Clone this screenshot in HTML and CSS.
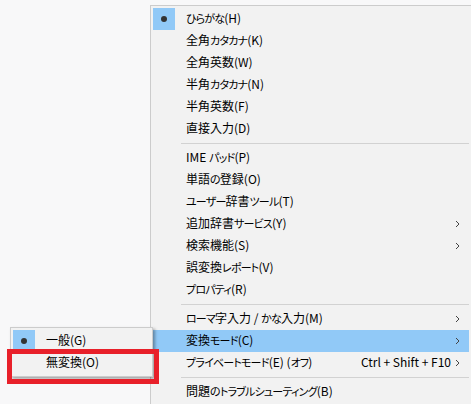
FILE: index.html
```html
<!DOCTYPE html>
<html lang="ja">
<head>
<meta charset="utf-8">
<link rel="stylesheet" href="styles.css">
</head>
<body>
<div class="desk">
  <div class="menu main">
    <div class="row"><span class="chk on"><span class="dot"></span></span><span class="label"><span class="k">ひらがな</span>(H)</span></div>
    <div class="row"><span class="chk"></span><span class="label">全角<span class="k">カタカナ</span>(K)</span></div>
    <div class="row"><span class="chk"></span><span class="label">全角英数(W)</span></div>
    <div class="row"><span class="chk"></span><span class="label">半角<span class="k">カタカナ</span>(N)</span></div>
    <div class="row"><span class="chk"></span><span class="label">半角英数(F)</span></div>
    <div class="row"><span class="chk"></span><span class="label">直接入力(D)</span></div>
    <div class="sep"></div>
    <div class="row"><span class="chk"></span><span class="label">IME <span class="k">パッド</span>(P)</span></div>
    <div class="row"><span class="chk"></span><span class="label">単語<span class="k">の</span>登録(O)</span></div>
    <div class="row"><span class="chk"></span><span class="label"><span class="k">ユーザー</span>辞書<span class="k">ツール</span>(T)</span></div>
    <div class="row"><span class="chk"></span><span class="label">追加辞書<span class="k">サービス</span>(Y)</span><svg class="arr" viewBox="0 0 5 8"><polyline points="1,1 4,4 1,7"/></svg></div>
    <div class="row"><span class="chk"></span><span class="label">検索機能(S)</span><svg class="arr" viewBox="0 0 5 8"><polyline points="1,1 4,4 1,7"/></svg></div>
    <div class="row"><span class="chk"></span><span class="label">誤変換<span class="k">レポート</span>(V)</span></div>
    <div class="row"><span class="chk"></span><span class="label"><span class="k">プロパティ</span>(R)</span></div>
    <div class="sep"></div>
    <div class="row"><span class="chk"></span><span class="label"><span class="k">ローマ</span>字入力 / <span class="k">かな</span>入力(M)</span><svg class="arr" viewBox="0 0 5 8"><polyline points="1,1 4,4 1,7"/></svg></div>
    <div class="row hl"><span class="chk"></span><span class="label">変換<span class="k">モード</span>(C)</span><svg class="arr" viewBox="0 0 5 8"><polyline points="1,1 4,4 1,7"/></svg></div>
    <div class="row"><span class="chk"></span><span class="label"><span class="k">プライベートモード</span>(E) (<span class="k">オフ</span>)</span><span class="key">Ctrl + Shift + F10</span><svg class="arr" viewBox="0 0 5 8"><polyline points="1,1 4,4 1,7"/></svg></div>
    <div class="sep"></div>
    <div class="row"><span class="chk"></span><span class="label">問題<span class="k">のトラブルシューティング</span>(B)</span></div>
  </div>
  <div class="menu sub">
    <div class="row"><span class="chk on"><span class="dot"></span></span><span class="label">一般(G)</span></div>
    <div class="row"><span class="chk"></span><span class="label">無変換(O)</span></div>
  </div>
  <div class="mark"></div>
</div>
</body>
</html>
```
FILE: styles.css
```css
html, body {
  margin: 0;
  height: 100%;
  overflow: hidden;
  background: #f8f8f9;
}

.desk {
  position: relative;
  width: 471px;
  height: 404px;
  overflow: hidden;
}

.menu {
  position: absolute;
  background: #f2f2f2;
  border: 1px solid #cccccc;
  padding: 2px;
  font-family: "Noto Sans CJK JP", "Noto Sans", sans-serif;
  font-size: 12px;
  color: #000;
  font-feature-settings: "palt";
}

.main {
  left: 150px;
  top: 5px;
  width: 316px;
}

.sub {
  left: 10px;
  top: 327px;
  width: 137px;
  box-shadow: 2px 2px 3px rgba(0, 0, 0, 0.35);
}

.row {
  display: flex;
  align-items: center;
  height: 22px;
  line-height: 22px;
}

.row.hl {
  background: #91c9f7;
}

.chk {
  width: 22px;
  height: 22px;
  display: flex;
  align-items: center;
  justify-content: center;
  flex: none;
}

.chk.on {
  background: #91c9f7;
}

.dot {
  width: 6px;
  height: 6px;
  border-radius: 50%;
  background: #333;
}

.label {
  flex: 1;
  padding-left: 11px;
  white-space: nowrap;
  position: relative;
  top: -1px;
}

.k {
  font-size: 11px;
  letter-spacing: -0.8px;
}

.key {
  margin-right: 4px;
  white-space: nowrap;
  position: relative;
  top: -1px;
}

.arr {
  width: 5px;
  height: 8px;
  margin-right: 9px;
  flex: none;
  fill: none;
  stroke: #444;
  stroke-width: 1;
}

.sep {
  height: 7px;
  display: flex;
  align-items: center;
  padding-left: 28px;
}

.sep::before {
  content: "";
  flex: 1;
  height: 1px;
  background: #d2d2d2;
}

.mark {
  position: absolute;
  left: 7px;
  top: 349px;
  width: 152px;
  height: 35px;
  box-sizing: border-box;
  border: 5px solid #e8202a;
}
```
